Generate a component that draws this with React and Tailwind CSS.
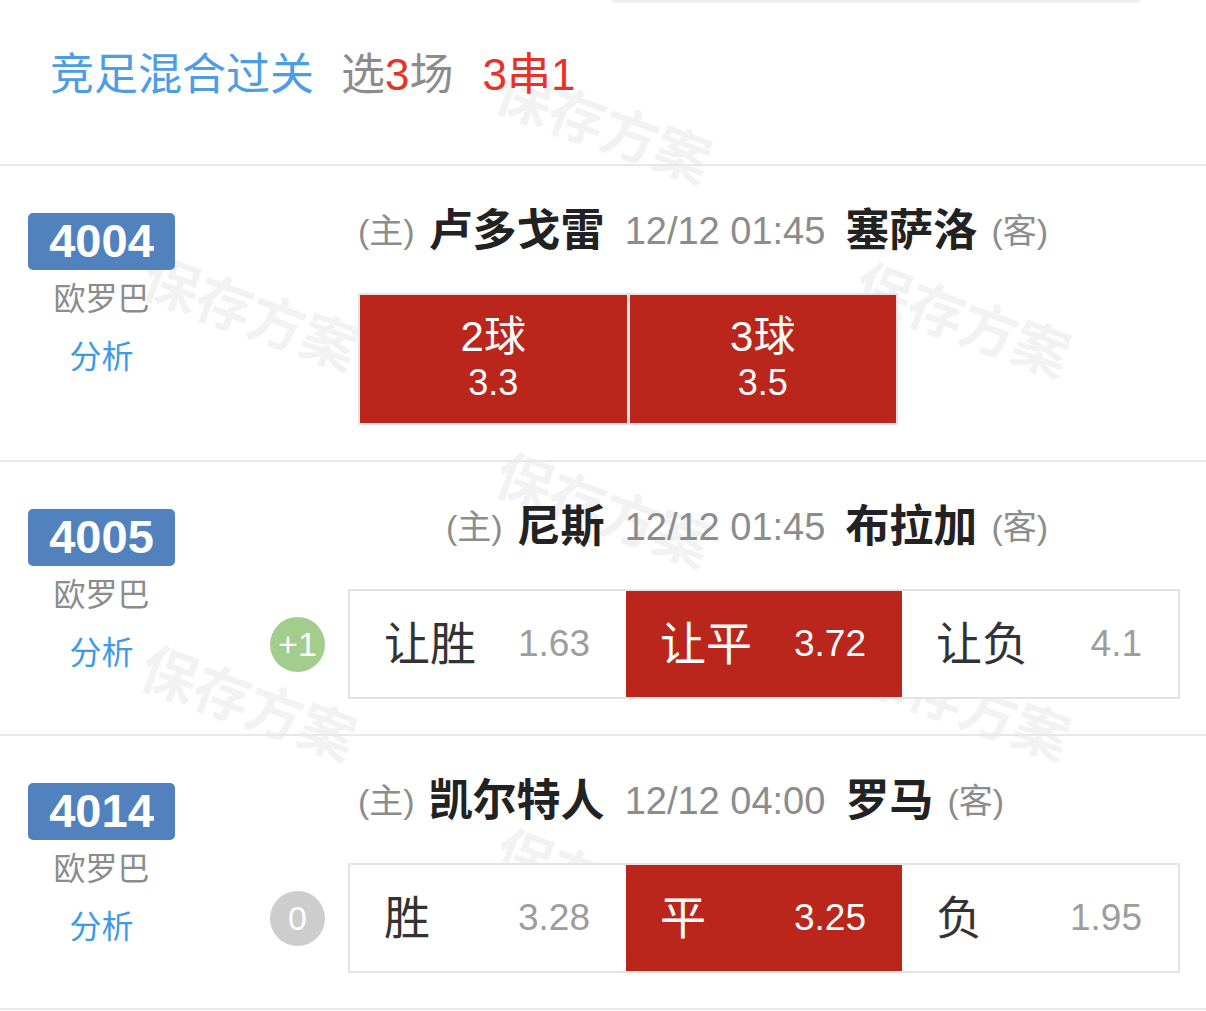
import React from "react";

const rows = [
  {
    no: "4004",
    home: "卢多戈雷",
    time: "12/12 01:45",
    away: "塞萨洛",
    cells: [
      { l: "2球", v: "3.3", on: true },
      { l: "3球", v: "3.5", on: true },
    ],
  },
  {
    no: "4005",
    home: "尼斯",
    time: "12/12 01:45",
    away: "布拉加",
    hc: "+1",
    cells: [
      { l: "让胜", v: "1.63" },
      { l: "让平", v: "3.72", on: true },
      { l: "让负", v: "4.1" },
    ],
  },
  {
    no: "4014",
    home: "凯尔特人",
    time: "12/12 04:00",
    away: "罗马",
    hc: "0",
    cells: [
      { l: "胜", v: "3.28" },
      { l: "平", v: "3.25", on: true },
      { l: "负", v: "1.95" },
    ],
  },
];

// faint "保存方案" stamps behind the list
const marks = [
  [603, 128],
  [250, 315],
  [962, 322],
  [603, 512],
  [248, 705],
  [962, 705],
  [603, 888],
];

function GoalCells({ cells }) {
  return (
    <div className="ml-[88px] flex w-[540px] h-[132px] border-2 border-[#e4e4e4] bg-[#e4e4e4] gap-[3px]">
      {cells.map((c) => (
        <div
          key={c.l}
          className="flex-1 bg-[#bb261c] text-white flex flex-col items-center justify-center"
        >
          <span className="text-[42px] leading-[48px]">{c.l}</span>
          <span className="text-[36px] leading-[44px]">{c.v}</span>
        </div>
      ))}
    </div>
  );
}

function OddsCells({ hc, cells }) {
  return (
    <div className="flex items-center">
      <div
        className={
          "w-[55px] h-[55px] rounded-full flex items-center justify-center text-white text-[34px] " +
          (hc === "0" ? "bg-[#cdcdcd]" : "bg-[#a2cd8c]")
        }
      >
        {hc}
      </div>
      <div className="ml-[23px] grid grid-cols-3 w-[832px] h-[110px] border-2 border-[#e4e4e4] bg-white">
        {cells.map((c) => (
          <div
            key={c.l}
            className={
              "flex items-center justify-between pl-[34px] pr-[36px] " +
              (c.on ? "bg-[#bb261c] text-white" : "text-[#333]")
            }
          >
            <span className="text-[46px]">{c.l}</span>
            <span
              className={
                "text-[37px] " + (c.on ? "text-white" : "text-[#9d9d9d]")
              }
            >
              {c.v}
            </span>
          </div>
        ))}
      </div>
    </div>
  );
}

function MatchRow({ row }) {
  return (
    <div className="flex border-b-2 border-[#e8e8e8]">
      <div className="ml-[28px] w-[147px] pt-[47px] flex flex-col items-center">
        <div className="w-[147px] h-[57px] rounded-[5px] bg-[#5282bd] text-white font-bold text-[47px] flex items-center justify-center">
          {row.no}
        </div>
        <div className="h-[58px] flex items-center text-[32px] text-[#8c8c8c]">
          欧罗巴
        </div>
        <div className="h-[58px] flex items-center text-[32px] text-[#3e9ae8]">
          分析
        </div>
      </div>
      <div className="ml-[95px] w-[910px] pt-[40px] pb-[35px]">
        <div className="h-[50px] flex items-center whitespace-nowrap">
          <div className="flex-1 flex justify-end items-center">
            <span className="text-[34px] text-[#8c8c8c] mr-[14px]">(主)</span>
            <span className="text-[44px] font-bold text-[#222]">{row.home}</span>
          </div>
          <span className="px-[20px] text-[38px] text-[#8c8c8c]">{row.time}</span>
          <div className="flex-1 flex items-center">
            <span className="text-[44px] font-bold text-[#222]">{row.away}</span>
            <span className="text-[34px] text-[#8c8c8c] ml-[14px]">(客)</span>
          </div>
        </div>
        <div className="mt-[37px]">
          {row.hc === undefined ? (
            <GoalCells cells={row.cells} />
          ) : (
            <OddsCells hc={row.hc} cells={row.cells} />
          )}
        </div>
      </div>
    </div>
  );
}

export default function App() {
  return (
    <div className="relative w-[1206px] h-[1011px] overflow-hidden bg-white font-['Liberation_Sans','Noto_Sans_CJK_SC',sans-serif]">
      {/* watermarks */}
      {marks.map(([x, y], i) => (
        <div
          key={i}
          className="absolute -translate-x-1/2 -translate-y-1/2 rotate-[20deg] text-[56px] font-bold text-[#f2f2f2] whitespace-nowrap pointer-events-none select-none"
          style={{ left: x, top: y }}
        >
          保存方案
        </div>
      ))}

      <div className="relative">
        {/* bottom edge of the box above */}
        <div className="ml-[612px] w-[528px] h-[3px] rounded-b-full bg-[#efefef]" />

        {/* HEADER */}
        <div className="h-[163px] pt-[42px] border-b-2 border-[#e8e8e8]">
          <div className="flex items-center h-[60px] pl-[50px] text-[44px] whitespace-nowrap">
            <span className="text-[#4a9de6]">竞足混合过关</span>
            <span className="ml-[27px] text-[#8c8c8c]">
              选<span className="text-[#e5332a]">3</span>场
            </span>
            <span className="ml-[29px] text-[#e5332a]">3串1</span>
          </div>
        </div>

        {rows.map((r) => (
          <MatchRow key={r.no} row={r} />
        ))}
      </div>
    </div>
  );
}
